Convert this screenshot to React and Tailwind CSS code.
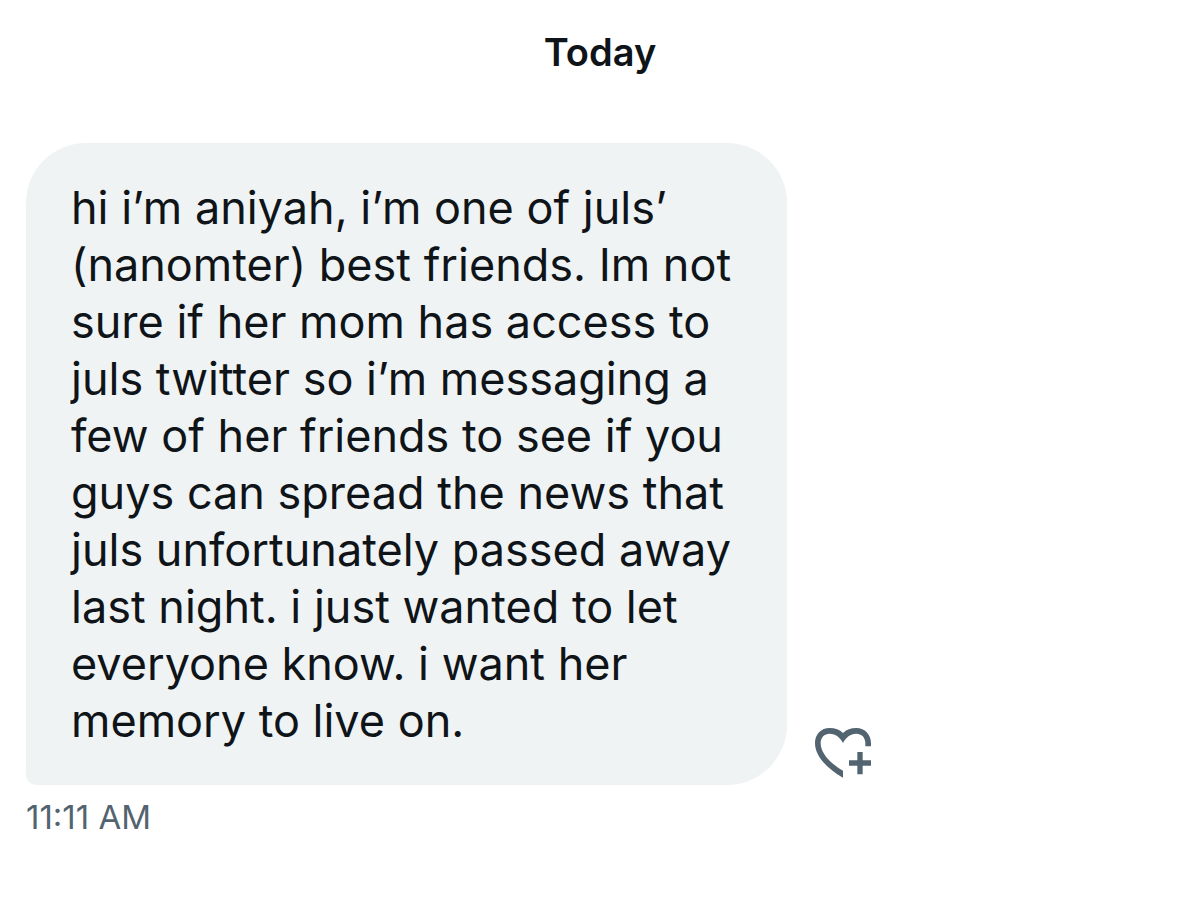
const message = 'hi i’m aniyah, i’m one of juls’ (nanomter) best friends. Im not sure if her mom has access to juls twitter so i’m messaging a few of her friends to see if you guys can spread the news that juls unfortunately passed away last night. i just wanted to let everyone know. i want her memory to live on.'

const HeartPlus = () => (
    <svg viewBox="44 38 168 150" className="block w-[56px] h-[50px]" fill="#536471">
        <path d="M128 187 C80 160 44 122 44 84 C44 56 62 38 88 38 C105 38 118 43 128 53 C138 43 151 38 168 38 C194 38 212 58 212 84 V93 H195 V84 C195 66 184 55 168 55 C150 55 137 66 128 83 C119 66 106 55 88 55 C72 55 61 66 61 84 C61 113 88 143 128 166 Z" />
        <path d="M171 110 H187 V135 H212 V151 H187 V177 H171 V151 H146 V135 H171 Z" />
    </svg>
)

const App = () => {
    return (
        <main className="min-h-screen bg-white px-[26px] pt-8 font-['Inter',sans-serif] text-[#0f1419]">
            <h1 className="text-center text-[38px] leading-10 font-semibold">Today</h1>
            <div className="mt-[71px] flex items-end gap-7">
                <p className="max-w-[761px] rounded-[60px] rounded-bl-[10px] bg-[#eff3f4] px-[45px] py-9 text-[45px] leading-[57px]">
                    {message}
                </p>
                <button aria-label="Add reaction" className="mb-[7px] shrink-0">
                    <HeartPlus />
                </button>
            </div>
            <time className="mt-3 block text-[33px] leading-10 text-[#536471]">11:11 AM</time>
        </main>
    )
}

export default App
